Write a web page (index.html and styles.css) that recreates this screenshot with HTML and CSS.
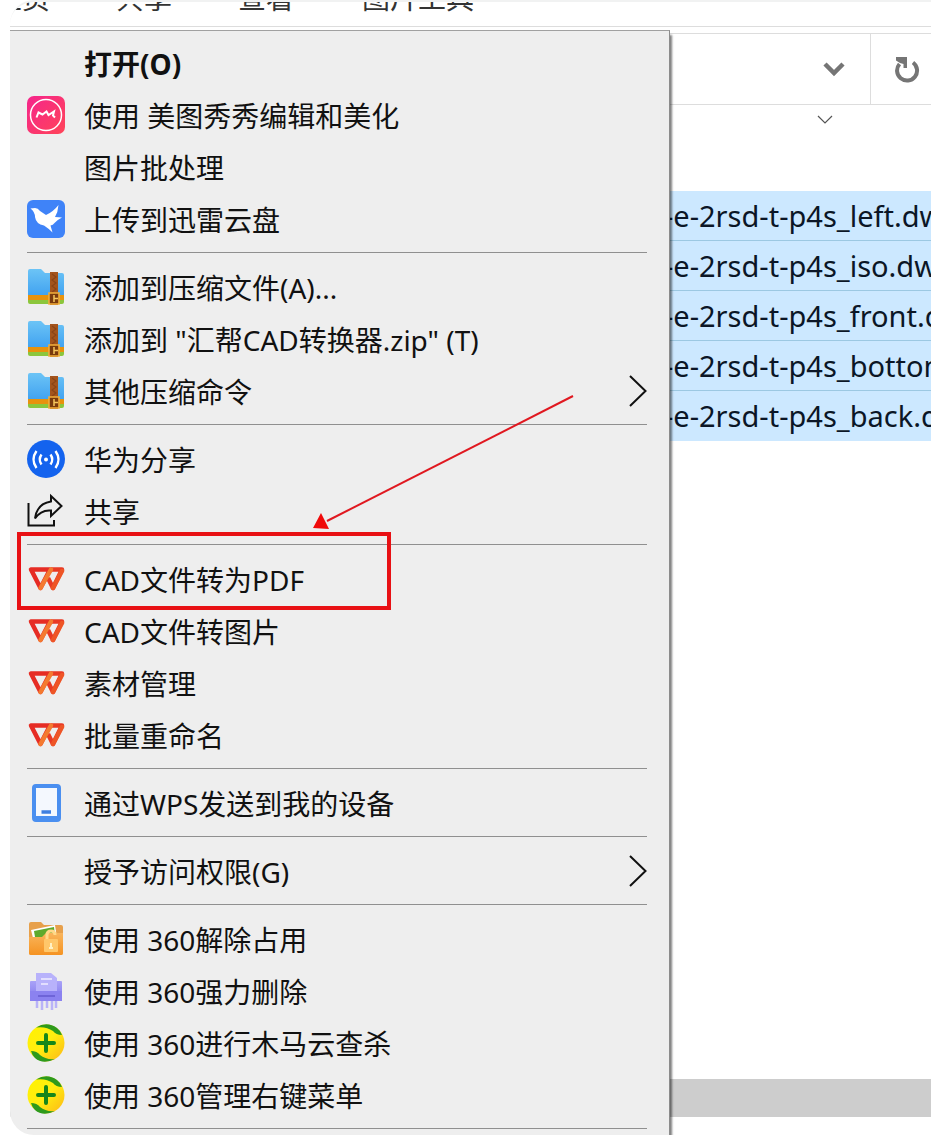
FILE: index.html
```html
<!DOCTYPE html>
<html lang="zh-CN">
<head>
    <meta charset="UTF-8">
    <meta name="viewport" content="width=device-width, initial-scale=1.0">
    <link rel="stylesheet" href="styles.css">
    <title>CAD文件转为PDF</title>
</head>
<body>
    <!-- shared icons -->
    <svg class="defs" aria-hidden="true">
        <defs>
            <linearGradient id="pink" x1="0" y1="0" x2="1" y2="1">
                <stop offset="0" stop-color="#f5258c"/>
                <stop offset="1" stop-color="#ff4458"/>
            </linearGradient>
            <linearGradient id="sky" x1="0" y1="0" x2="0" y2="1">
                <stop offset="0" stop-color="#6cc4f6"/>
                <stop offset="1" stop-color="#3d9ff0"/>
            </linearGradient>
            <linearGradient id="fold" x1="0" y1="0" x2="0" y2="1">
                <stop offset="0" stop-color="#f9b55c"/>
                <stop offset="1" stop-color="#f59322"/>
            </linearGradient>
            <linearGradient id="violet" x1="0" y1="0" x2="0" y2="1">
                <stop offset="0" stop-color="#a9a2f8"/>
                <stop offset="1" stop-color="#7f76ea"/>
            </linearGradient>
            <linearGradient id="sun" x1="0" y1="0" x2="1" y2="1">
                <stop offset="0" stop-color="#fff200"/>
                <stop offset="0.5" stop-color="#ffee10"/>
                <stop offset="1" stop-color="#fdb515"/>
            </linearGradient>
            <symbol id="zip" viewBox="0 0 38 38">
                <path d="M1 3Q1 1 3 1H14L18 5H35Q37 5 37 7V30H1Z" fill="url(#sky)"/>
                <path d="M1 27H37V32H1Z" fill="#e8920c"/>
                <path d="M1 32H37V34Q37 36 35 36H3Q1 36 1 34Z" fill="#8cc63c"/>
                <path d="M23 4H31V37H23Z" fill="#a4541c"/>
                <path d="M25 6L29 9L25 12L29 15L25 18L29 21L25 24" fill="none" stroke="#8a4416" stroke-width="1.200"/>
                <path d="M22 25H32V36H22Z" fill="#7a3a0c" stroke="#f2ae3a" stroke-width="1.600"/>
                <path d="M27 27V34M27 30.500H31" stroke="#f6c65c" stroke-width="1.500"/>
            </symbol>
            <symbol id="w" viewBox="0 0 38 38">
                <path d="M4 9.500H23L13.500 28Z" fill="none" stroke="#e62c24" stroke-width="4.500" stroke-linejoin="round"/>
                <path d="M24 9.500H35L26 28L21 18" fill="none" stroke="#e93a24" stroke-width="4.500" stroke-linejoin="round"/>
                <path d="M35 11L26 28" stroke="#ee5526" stroke-width="4.500" stroke-linecap="round"/>
                <path d="M24 9.500L13.500 28" stroke="#f47a30" stroke-width="4.500" stroke-linecap="round"/>
            </symbol>
            <symbol id="plus" viewBox="0 0 38 38">
                <circle cx="19" cy="19" r="18.500" fill="url(#sun)"/>
                <path d="M9 3.500Q20 -3 30 4Q34 7 35 11Q29 11 26 7Q19 2 9 3.500Z" fill="#2e9a1c"/>
                <path d="M4 27Q10 27 13 31Q19 36 28 35Q16 41 8 34Q5 31 4 27Z" fill="#2e9a1c"/>
                <path d="M19 11V27M11 19H27" stroke="#16861a" stroke-width="4" stroke-linecap="round"/>
            </symbol>
            <symbol id="more" viewBox="0 0 18 32">
                <path d="M1 1L16.500 16L1 31" fill="none" stroke="#111" stroke-width="2"/>
            </symbol>
        </defs>
    </svg>

    <div class="window">
        <nav class="tabs">
            <a class="tab tab-home" href="#home">主页</a>
            <a class="tab tab-share" href="#share">共享</a>
            <a class="tab tab-view" href="#view">查看</a>
            <a class="tab tab-tools" href="#tools">图片工具</a>
        </nav>
        <div class="address">
            <button class="history" aria-label="历史">
                <svg width="22" height="16" viewBox="0 0 22 16"><path d="M2 3L11 12L20 3" fill="none" stroke="#757575" stroke-width="4.500"/></svg>
            </button>
            <button class="refresh" aria-label="刷新">
                <svg width="26" height="28" viewBox="0 0 26 28"><path d="M5.500 9A10 10 0 1 0 19 7.500" fill="none" stroke="#757575" stroke-width="4"/><path d="M2 2H13V13H9.500V9L6 8L2 5.500Z" fill="#757575"/></svg>
            </button>
        </div>
        <div class="columns">
            <svg width="16" height="10" viewBox="0 0 16 10"><path d="M1 1L8 8L15 1" fill="none" stroke="#555" stroke-width="1.200"/></svg>
        </div>
        <ul class="files">
            <li class="file">-e-2rsd-t-p4s_left.dwg</li>
            <li class="file">-e-2rsd-t-p4s_iso.dwg</li>
            <li class="file">-e-2rsd-t-p4s_front.dwg</li>
            <li class="file">-e-2rsd-t-p4s_bottom.dwg</li>
            <li class="file">-e-2rsd-t-p4s_back.dwg</li>
        </ul>
        <div class="scrollbar"></div>

        <ul class="menu">
            <li><button class="item open"><span class="icon"></span>打开(O)</button></li>
            <li><button class="item">
                <svg class="icon" viewBox="0 0 38 38"><rect width="38" height="38" rx="7" fill="url(#pink)"/><circle cx="19" cy="19" r="15.500" fill="none" stroke="#fff" stroke-width="1.500"/><path d="M9.500 21.500L11.500 16.500L15.500 18.500L19.500 15.500L21.500 19L27 15.500L26 19.500L28 21.500" fill="none" stroke="#fff" stroke-width="2"/></svg>
                使用 美图秀秀编辑和美化</button></li>
            <li><button class="item"><span class="icon"></span>图片批处理</button></li>
            <li><button class="item">
                <svg class="icon" viewBox="0 0 38 38"><rect width="38" height="38" rx="6" fill="#3f83f8"/><path d="M3.500 8.500L8 8Q11 8 13 11L19 15Q26 12 31.500 5Q31 12 28 17L35 17.500Q30 20 27.500 23Q26 25 23.500 25.500L25.500 32.500Q21 28 17 25.500Q9 24 8 17Q8 12 3.500 8.500Z" fill="#fff"/></svg>
                上传到迅雷云盘</button></li>
            <li class="line"></li>
            <li><button class="item"><svg class="icon"><use href="#zip"/></svg>添加到压缩文件(A)...</button></li>
            <li><button class="item"><svg class="icon"><use href="#zip"/></svg>添加到 "汇帮CAD转换器.zip" (T)</button></li>
            <li><button class="item"><svg class="icon"><use href="#zip"/></svg>其他压缩命令<svg class="more"><use href="#more"/></svg></button></li>
            <li class="line"></li>
            <li><button class="item">
                <svg class="icon" viewBox="0 0 38 38"><circle cx="19" cy="19" r="19" fill="#1463ee"/><circle cx="19" cy="19.500" r="2" fill="#fff"/><path d="M14.500 14.500Q11 19.500 14.500 24.500M23.500 14.500Q27 19.500 23.500 24.500M9.500 11Q3.500 19.500 9.500 28M28.500 11Q34.500 19.500 28.500 28" fill="none" stroke="#fff" stroke-width="2.400"/></svg>
                华为分享</button></li>
            <li><button class="item">
                <svg class="icon" viewBox="0 0 38 38"><path d="M1.500 11V33.500H27V28" fill="none" stroke="#111" stroke-width="2"/><path d="M24 4L34.500 14L24 24V18.500Q14 17.500 8 26.500Q10 11.500 24 9.500Z" fill="none" stroke="#111" stroke-width="2"/></svg>
                共享</button></li>
            <li class="line"></li>
            <li class="marked">
                <button class="item"><svg class="icon"><use href="#w"/></svg>CAD文件转为PDF</button>
                <span class="frame"></span>
                <svg class="arrow" viewBox="0 0 264 138"><path d="M262 2L16 127" stroke="#e01820" stroke-width="2"/><path d="M10 119L2 134L18 135Z" fill="#f00a0a"/></svg>
            </li>
            <li><button class="item"><svg class="icon"><use href="#w"/></svg>CAD文件转图片</button></li>
            <li><button class="item"><svg class="icon"><use href="#w"/></svg>素材管理</button></li>
            <li><button class="item"><svg class="icon"><use href="#w"/></svg>批量重命名</button></li>
            <li class="line"></li>
            <li><button class="item">
                <svg class="icon" viewBox="0 0 38 38"><rect x="7" y="2" width="25" height="34" rx="2" fill="#f4f8fe" stroke="#4a8ff0" stroke-width="4"/><path d="M7 34.500H32" stroke="#4a8ff0" stroke-width="5"/><path d="M14.500 28H24" stroke="#3f7fe0" stroke-width="3.500"/></svg>
                通过WPS发送到我的设备</button></li>
            <li class="line"></li>
            <li><button class="item"><span class="icon"></span>授予访问权限(G)<svg class="more"><use href="#more"/></svg></button></li>
            <li class="line"></li>
            <li><button class="item">
                <svg class="icon" viewBox="0 0 38 38"><path d="M2 4Q2 2 4 2H14L17 5H34Q36 5 36 7V33Q36 35 34 35H4Q2 35 2 33Z" fill="#e7a04b"/><path d="M4 10L28 5L30 18H6Z" fill="#fff"/><path d="M7 11L27 7L28 17H8Z" fill="#5eaa2c"/><path d="M2 17H15L19 13H36V33Q36 35 34 35H4Q2 35 2 33Z" fill="url(#fold)"/><path d="M20 20V15Q20 11 24 11Q28 11 28 15" fill="none" stroke="#ffd98a" stroke-width="3"/><rect x="17" y="19" width="14" height="13" rx="1" fill="#ffc76a"/><path d="M24 23V28M22 28H26" stroke="#fff1c4" stroke-width="2"/></svg>
                使用 360解除占用</button></li>
            <li><button class="item">
                <svg class="icon" viewBox="0 0 38 38"><rect x="3" y="9" width="32" height="20" rx="1" fill="url(#violet)"/><path d="M9 1H24L30 6V20H9Z" fill="#b8b2fb"/><path d="M14 7H25M14 12H21" stroke="#efedff" stroke-width="1.500"/><path d="M3 19H35V29H3Z" fill="#8b82f0"/><path d="M11 24H28" stroke="#6e64d8" stroke-width="2"/><path d="M10 29V36M15 29V38M20 29V36M25 29V38M29 29V36" stroke="#b9b3f8" stroke-width="2.500"/></svg>
                使用 360强力删除</button></li>
            <li><button class="item"><svg class="icon"><use href="#plus"/></svg>使用 360进行木马云查杀</button></li>
            <li><button class="item"><svg class="icon"><use href="#plus"/></svg>使用 360管理右键菜单</button></li>
            <li class="line"></li>
        </ul>
    </div>
</body>
</html>
```
FILE: styles.css
```css
* {
  box-sizing: border-box;
}
body {
  margin: 0;
  background: #fff;
  color: #111;
  font-family: "Noto Sans", "Noto Sans CJK SC", sans-serif;
  font-size: 28px;
}
ul {
  margin: 0;
  padding: 0;
  list-style: none;
}
button {
  padding: 0;
  border: 0;
  background: none;
  color: inherit;
  font: inherit;
  cursor: pointer;
}
.defs {
  position: absolute;
  width: 0;
  height: 0;
}
.window {
  position: relative;
  display: flex;
  flex-direction: column;
  height: 100vh;
  margin-left: 10px;
  padding-bottom: 18px;
  overflow: hidden;
  border-top: 2px solid #f1f2f2;
  border-radius: 24px 0 0 24px;
  background: #fff;
}
.tabs {
  display: flex;
  align-items: flex-end;
  flex-shrink: 0;
  height: 25px;
  padding-bottom: 12px;
  overflow: hidden;
  border-bottom: 1px solid #ddd;
}
.tab {
  color: #333;
  line-height: 32px;
  text-decoration: none;
  white-space: nowrap;
}
.tab-home {
  margin-left: -16px;
}
.tab-share,
.tab-view {
  margin-left: 66px;
}
.tab-tools {
  margin-left: 68px;
}
.address {
  display: flex;
  justify-content: flex-end;
  flex-shrink: 0;
  height: 72px;
  margin-top: 6px;
  border-top: 1px solid #ddd;
  border-bottom: 1px solid #ddd;
}
.history,
.refresh {
  display: flex;
  align-items: center;
  justify-content: center;
}
.history {
  width: 72px;
}
.refresh {
  width: 61px;
  padding-left: 12px;
  border-left: 1px solid #ddd;
}
.columns {
  display: flex;
  justify-content: flex-end;
  flex-shrink: 0;
  height: 86px;
  padding: 10px 98px 0 0;
}
.files {
  overflow: hidden;
}
.file {
  height: 50px;
  padding-left: calc(100% - 267px);
  border-bottom: 1px solid #9cc8e2;
  background: #cce8ff;
  color: #0b1626;
  font-size: 29px;
  line-height: 50px;
  white-space: nowrap;
}
.file:last-child {
  border-bottom: 0;
}
.scrollbar {
  flex-shrink: 0;
  height: 38px;
  margin-top: auto;
  background: #cdcdcd;
}
.menu {
  position: absolute;
  top: 28px;
  left: 0;
  width: calc(100% - 261px);
  padding: 6px 22px 16px 17px;
  border-top: 1px solid #a0a0a0;
  border-right: 1px solid #8c8c8c;
  background: #eee;
  box-shadow: 2px 5px 2px rgba(0, 0, 0, 0.5);
}
.item {
  display: flex;
  align-items: center;
  gap: 19px;
  width: 100%;
  height: 52px;
  text-align: left;
  white-space: nowrap;
}
.open {
  font-weight: bold;
}
.icon {
  flex-shrink: 0;
  width: 38px;
  height: 38px;
}
.more {
  width: 18px;
  height: 32px;
  margin-left: auto;
}
.line {
  height: 1px;
  margin: 7px 0 8px;
  background: #8f8f8f;
}
.marked {
  position: relative;
}
/* red frame and arrow pointing at the menu item */
.frame {
  position: absolute;
  top: -21px;
  left: -10px;
  width: 374px;
  height: 78px;
  border: 4px solid #e81014;
  pointer-events: none;
}
.arrow {
  position: absolute;
  top: -159px;
  left: 284px;
  width: 264px;
  height: 138px;
  pointer-events: none;
}
```
